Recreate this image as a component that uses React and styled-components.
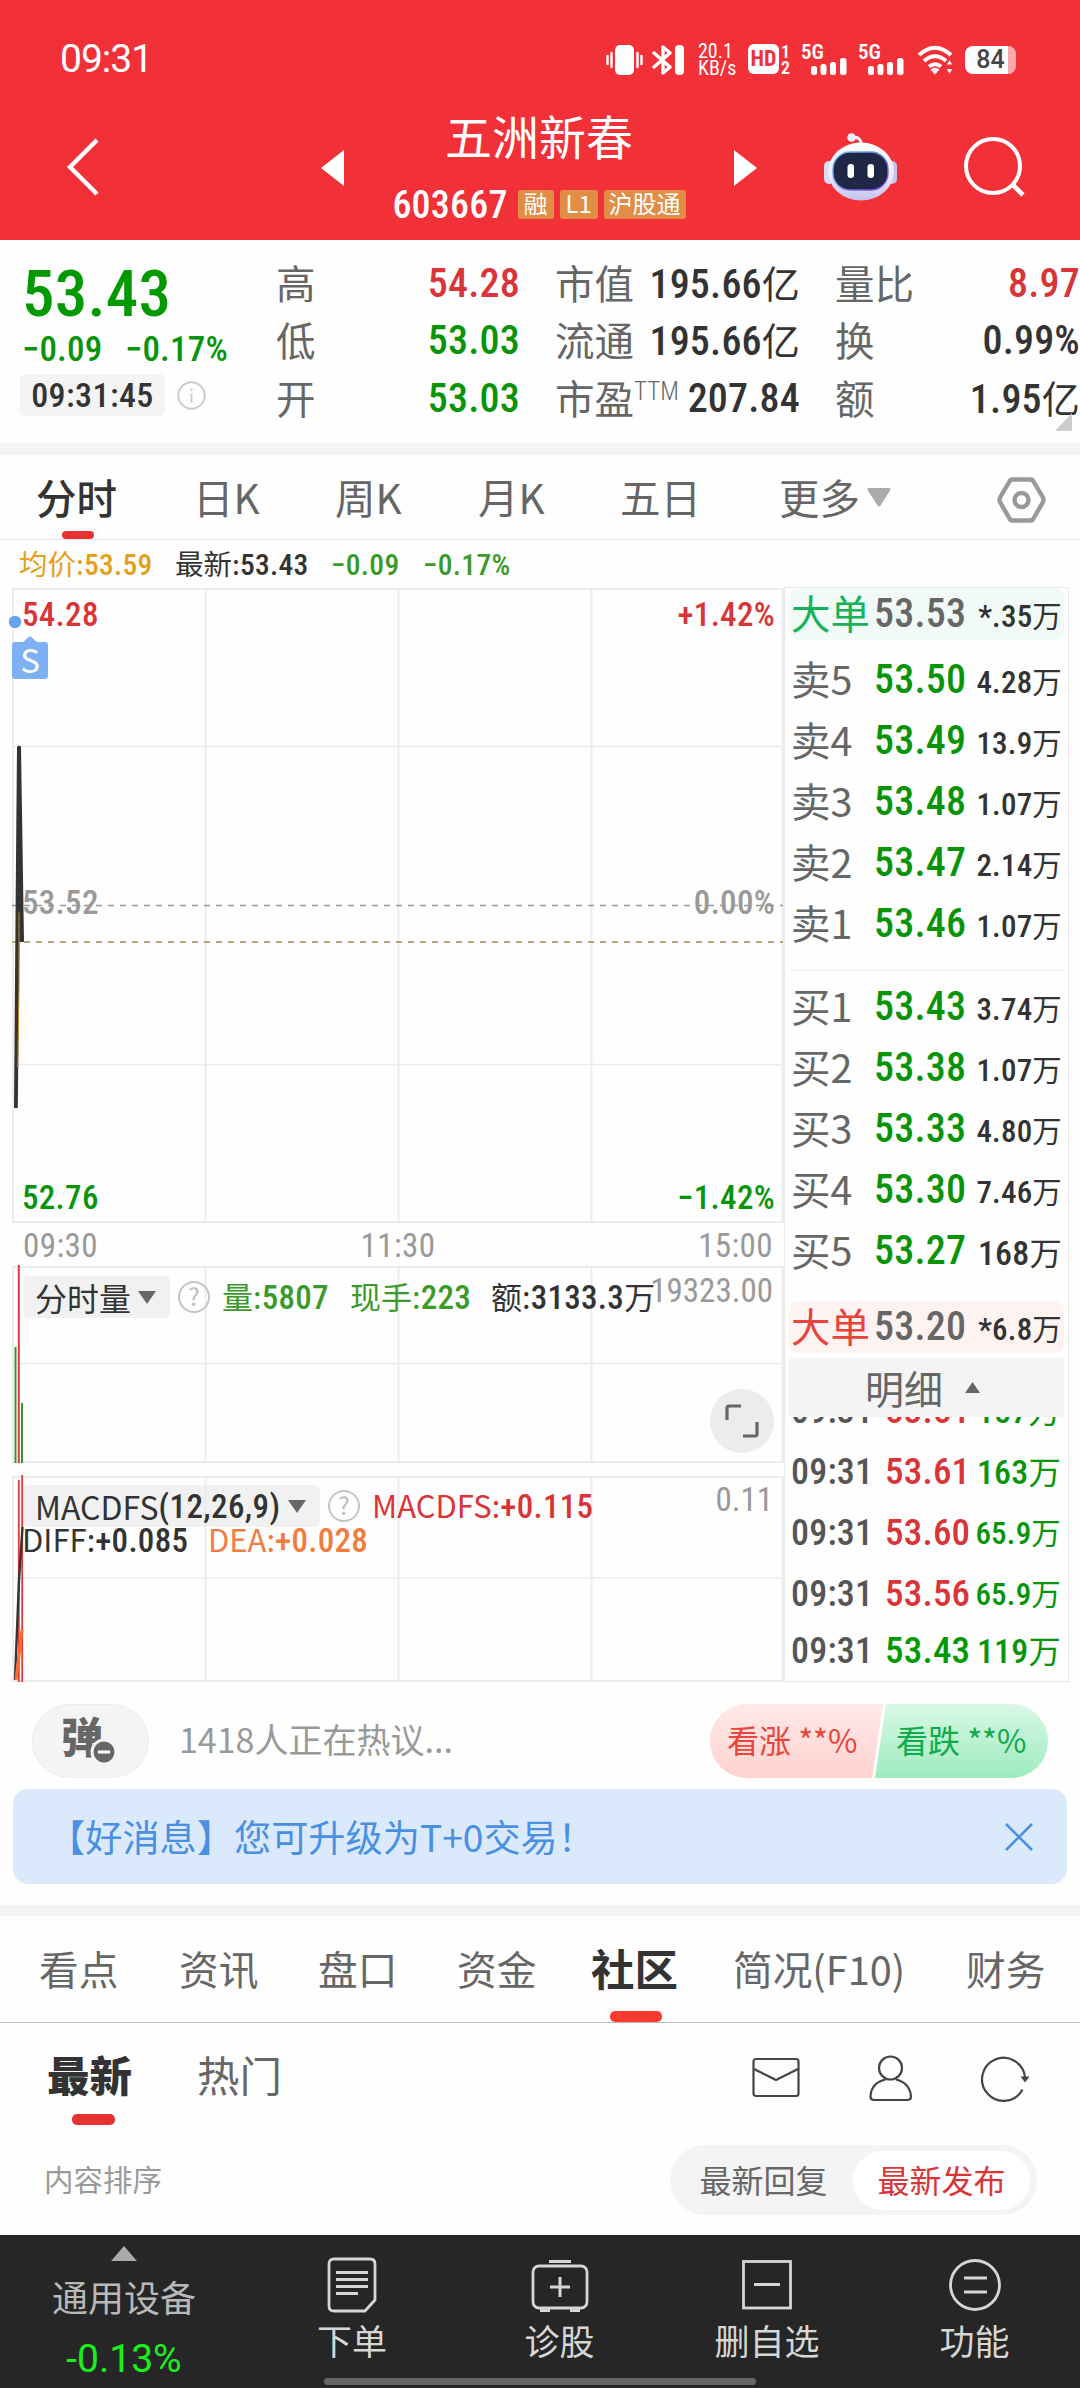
import React from 'react'
import styled, { createGlobalStyle, css } from 'styled-components'

const RED = '#d93437'
const GREEN = '#089408'
const INK = '#333'
const GREY = '#666'

export default function App () {
  return (
    <>
      <GlobalStyle />
      <Page>
        <Header />
        <Quote />
        <Strip $h={12} />
        <PeriodTabs />
        <Legend />
        <Market />
        <Discussion />
        <Banner>
          【好消息】您可升级为T+0交易！
          <svg width="28" height="28" viewBox="0 0 28 28" stroke="#4a90e2" strokeWidth="2.6">
            <path d="M1 1L27 27M27 1L1 27" />
          </svg>
        </Banner>
        <Strip $h={11} />
        <Community />
        <BottomBar />
      </Page>
    </>
  )
}

/* ---------- header ---------- */

function Header () {
  return (
    <StyledHeader>
      <StatusBar>
        <Clock>09:31</Clock>
        <StatusIcons />
      </StatusBar>
      <TitleBar>
        <svg width="34" height="58" viewBox="0 0 34 58" fill="none" stroke="#fff" strokeWidth="4.4">
          <path d="M31 2L4 29L31 56" />
        </svg>
        <Arrow viewBox="0 0 23 36"><path d="M0 18L23 0V36Z" /></Arrow>
        <StockTitle>
          <h1>五洲新春</h1>
          <StockCode>
            <Num $size={38} $color="#fff">603667</Num>
            <Tag $w={36}>融</Tag>
            <Tag $w={38}>L1</Tag>
            <Tag $w={82}>沪股通</Tag>
          </StockCode>
        </StockTitle>
        <Arrow viewBox="0 0 23 36"><path d="M23 18L0 0V36Z" /></Arrow>
        <Robot />
        <svg width="62" height="62" viewBox="0 0 62 62" fill="none" stroke="#fff" strokeWidth="4">
          <circle cx="30" cy="30" r="27" />
          <path d="M50 49L60 59" strokeWidth="4.6" />
        </svg>
      </TitleBar>
    </StyledHeader>
  )
}

function StatusIcons () {
  return (
    <IconRow>
      <svg width="37" height="32" viewBox="0 0 37 32" fill="#fff">
        <rect x="9" y="1" width="19" height="30" rx="5" />
        <path d="M1.500 12v8M5.500 9v14M31.500 9v14M35.500 12v8" stroke="#fff" strokeWidth="2.4" strokeLinecap="round" />
      </svg>
      <svg width="33" height="32" viewBox="0 0 33 32" fill="none" stroke="#fff" strokeWidth="3.4">
        <path d="M2 9L18 23L11 29V3L18 9L2 23" strokeLinejoin="round" strokeLinecap="round" />
        <rect x="23" y="1" width="9" height="30" rx="4" fill="#fff" stroke="none" />
      </svg>
      <NetSpeed>
        <span>20.1</span>
        <span>KB/s</span>
      </NetSpeed>
      <HdGroup>
        <HdBox>HD</HdBox>
        <HdNums><span>1</span><span>2</span></HdNums>
      </HdGroup>
      <Signal />
      <Signal />
      <svg width="37" height="30" viewBox="0 0 37 30" fill="none" stroke="#fff" strokeWidth="4">
        <path d="M2 10Q18 -4.500 34 10" />
        <path d="M7 16Q18 6.500 29 16" />
        <path d="M12 21.500Q18 17 24 21.500" />
        <path d="M13.500 24.500L18 29.500L22.500 24.500Q18 21 13.500 24.500Z" fill="#fff" stroke="none" />
        <path d="M32.500 14.500L36 20H29ZM32.500 29.500L36 23.500H29Z" fill="#fff" stroke="#f23037" strokeWidth="1" />
      </svg>
      <Battery>84</Battery>
    </IconRow>
  )
}

function Signal () {
  return (
    <SignalBox>
      <span>5G</span>
      <svg width="36" height="17" viewBox="0 0 36 17" fill="#fff">
        <rect x="0" y="8" width="6" height="9" rx="2.500" />
        <rect x="9.500" y="6" width="6" height="11" rx="2.500" />
        <rect x="19" y="4" width="6" height="13" rx="2.500" />
        <rect x="29" y="0" width="6.500" height="17" rx="2.500" />
      </svg>
    </SignalBox>
  )
}

function Robot () {
  return (
    <svg width="74" height="68" viewBox="0 0 74 68">
      <defs>
        <linearGradient id="shell" x1="0" y1="0" x2="0" y2="1">
          <stop offset="0" stopColor="#fff" />
          <stop offset=".6" stopColor="#eceafc" />
          <stop offset="1" stopColor="#c4c2ee" />
        </linearGradient>
        <linearGradient id="rim" x1="0" y1="0" x2="1" y2="1">
          <stop offset="0" stopColor="#6fc4e8" />
          <stop offset="1" stopColor="#7b3fe0" />
        </linearGradient>
      </defs>
      <path d="M37 12Q38 4 28 4" fill="none" stroke="#f1f0fb" strokeWidth="3" />
      <circle cx="27.500" cy="4.500" r="4.300" fill="#f1f0fb" />
      <rect x="0" y="28" width="10" height="23" rx="5" fill="#dddcf7" />
      <rect x="63" y="28" width="10" height="23" rx="5" fill="#c4c2f0" />
      <ellipse cx="37" cy="38.500" rx="33" ry="29" fill="url(#shell)" />
      <rect x="9" y="19" width="55" height="38" rx="17" fill="#1f2747" stroke="url(#rim)" strokeWidth="1.400" />
      <rect x="23.500" y="31" width="6.500" height="14" rx="3.200" fill="#fff" />
      <rect x="43.500" y="31" width="6.500" height="14" rx="3.200" fill="#fff" />
    </svg>
  )
}

/* ---------- quote panel ---------- */

const quoteRows = [
  ['高', '54.28', RED, '市值', '195.66亿', '量比', '8.97', RED],
  ['低', '53.03', GREEN, '流通', '195.66亿', '换', '0.99%', INK],
  ['开', '53.03', GREEN, '市盈', '207.84', '额', '1.95亿', INK],
]

function Quote () {
  return (
    <StyledQuote>
      <PriceBlock>
        <Num $size={65} $color="#090">53.43</Num>
        <Changes>
          <Num $size={35} $color={GREEN}>−0.09</Num>
          <Num $size={35} $color={GREEN}>−0.17%</Num>
        </Changes>
        <TimeLine>
          <TimeBox>09:31:45</TimeBox>
          <svg width="29" height="29" viewBox="0 0 29 29" fill="none" stroke="#ccc" strokeWidth="2">
            <circle cx="14.500" cy="14.500" r="13.200" />
            <path d="M14.500 12.500v9M14.500 7.500v2.500" />
          </svg>
        </TimeLine>
      </PriceBlock>
      <QuoteTable>
        {quoteRows.map(([a, av, ac, b, bv, c, cv, cc]) => (
          <QuoteRow key={a}>
            <Label>{a}</Label>
            <Num $size={40} $color={ac} $right>{av}</Num>
            <Label>{b}{b === '市盈' && <sup>TTM</sup>}</Label>
            <Num $size={40} $color={INK} $right>{withUnit(bv)}</Num>
            <Label>{c}</Label>
            <Num $size={40} $color={cc} $right>{withUnit(cv)}</Num>
          </QuoteRow>
        ))}
      </QuoteTable>
      <Corner viewBox="0 0 17 18"><path d="M17 0V18H0Z" /></Corner>
    </StyledQuote>
  )
}

// the unit is set in the regular CJK face, the digits in the condensed one
function withUnit (text) {
  const unit = text.slice(-1)
  if (unit !== '亿' && unit !== '万') return text
  return <>{text.slice(0, -1)}<Unit>{unit}</Unit></>
}

/* ---------- period tabs and legend ---------- */

function PeriodTabs () {
  return (
    <StyledPeriods>
      <Tab $active>分时</Tab>
      <Tab>日K</Tab>
      <Tab>周K</Tab>
      <Tab>月K</Tab>
      <Tab>五日</Tab>
      <Tab>
        更多
        <svg width="24" height="19" viewBox="0 0 24 19" fill="#aaa"><path d="M2 0H22Q24.500 0 23 2.500L13.500 17.500Q12 19.500 10.500 17.500L1 2.500Q-.5 0 2 0Z" /></svg>
      </Tab>
      <svg width="49" height="46" viewBox="0 0 49 46" fill="none" stroke="#999" strokeWidth="4.400" strokeLinejoin="round">
        <path d="M15.500 2.500H33.500Q35.500 2.500 36.500 4.500L46 20.500Q47 23 46 25L36.500 41.500Q35.500 43.500 33.500 43.500H15.500Q13.500 43.500 12.500 41.500L3 25Q2 23 3 20.500L12.500 4.500Q13.500 2.500 15.500 2.500Z" />
        <circle cx="24.500" cy="23" r="7" />
      </svg>
    </StyledPeriods>
  )
}

function Legend () {
  return (
    <StyledLegend>
      <Reading $color="#e3a01f">均价:<b>53.59</b></Reading>
      <Reading $color={INK}>最新:<b>53.43</b></Reading>
      <Reading $color="#3a9a2a"><b>−0.09</b></Reading>
      <Reading $color="#3a9a2a"><b>−0.17%</b></Reading>
    </StyledLegend>
  )
}

/* ---------- charts ---------- */

function Grid ({ h, lines, thick = 2 }) {
  return (
    <g stroke="#ebebeb" fill="none">
      <path d={`M13 1V${h}M205.500 1V${h}M398.500 1V${h}M591.500 1V${h}`} strokeWidth="1.800" />
      <path d={`M783 1V${h}`} strokeWidth="2.600" />
      <path d={`M12 2H784M12 ${h - 1}H784`} strokeWidth={thick} />
      {lines.map(y => <path key={y} d={`M12 ${y}H784`} strokeWidth="1.600" />)}
    </g>
  )
}

function Market () {
  return (
    <StyledMarket>
      <Charts>
        <Panel $h={636}>
          <Plot viewBox="0 0 784 636">
            <Grid h={636} lines={[159.5, 477.5]} />
            <path d="M12 318.500H783" stroke="#999" strokeWidth="1.600" strokeDasharray="6 6" />
            <path d="M12 355H783" stroke="#b9a47a" strokeWidth="2" strokeDasharray="6 6" />
            <path d="M17 160Q19 157 21 160L24 355H19.500L17.800 521H14L15.500 330Z" fill="#333" />
            <path d="M19 325V400L17.800 480" stroke="#c98a22" strokeWidth="1" fill="none" />
            <circle cx="15" cy="35" r="6.200" fill="#66a3ee" />
            <path d="M22 56L30 49L38 56Z" fill="#7eb1f3" />
            <rect x="12" y="55" width="36" height="37" rx="3" fill="#7eb1f3" />
          </Plot>
          <SellMark>S</SellMark>
          <PanelLabels>
            <LabelRow><AxisNum $color={RED}>54.28</AxisNum><AxisNum $color={RED}>+1.42%</AxisNum></LabelRow>
            <LabelRow $lift><AxisNum $color="#999">53.52</AxisNum><AxisNum $color="#999">0.00%</AxisNum></LabelRow>
            <LabelRow><AxisNum $color={GREEN}>52.76</AxisNum><AxisNum $color={GREEN}>−1.42%</AxisNum></LabelRow>
          </PanelLabels>
        </Panel>
        <TimeAxis>
          <span>09:30</span>
          <span>11:30</span>
          <span>15:00</span>
        </TimeAxis>
        <Panel $h={198}>
          <Plot viewBox="0 0 784 198">
            <Grid h={198} lines={[98.5]} />
            <path d="M15.500 82V198M22 138V198" stroke="#3f8f33" strokeWidth="2" />
            <path d="M18.800 0V198" stroke="#dc3a3c" strokeWidth="2" />
          </Plot>
          <IndicatorRow $top={11}>
            <Picker $w={147}>分时量<Down /></Picker>
            <HelpMark>?</HelpMark>
            <Reading $big $color="#3a9a2a" $w={128}>量:<b>5807</b></Reading>
            <Reading $big $color="#3a9a2a" $w={141}>现手:<b>223</b></Reading>
            <Reading $big $color={INK}>额:<b>3133.3</b>万</Reading>
          </IndicatorRow>
          <PanelMax $top={9}>19323.00</PanelMax>
          <Expand>
            <svg width="34" height="34" viewBox="0 0 34 34" fill="none" stroke="#666" strokeWidth="3.200">
              <path d="M2 16V4Q2 2 4 2H16M32 18V30Q32 32 30 32H18" />
            </svg>
          </Expand>
        </Panel>
        <Spacer />
        <Panel $h={207}>
          <Plot viewBox="0 0 784 207">
            <Grid h={207} lines={[103]} />
            <path d="M18.800 5V207M22.200 0V207" stroke="#dc3a3c" strokeWidth="1.800" />
            <path d="M15 205L19 105L22.500 52" stroke="#333" strokeWidth="2.400" fill="none" />
            <path d="M16 205L22 155" stroke="#ff6a2b" strokeWidth="3" fill="none" />
          </Plot>
          <IndicatorRow $top={10}>
            <Picker $w={297}>MACDFS<b>(12,26,9)</b><Down /></Picker>
            <HelpMark>?</HelpMark>
            <Reading $big $color={RED}>MACDFS:<b>+0.115</b></Reading>
          </IndicatorRow>
          <SecondRow>
            <Reading $big $color={INK} $w={186}>DIFF:<b>+0.085</b></Reading>
            <Reading $big $color="#f07c42">DEA:<b>+0.028</b></Reading>
          </SecondRow>
          <PanelMax $top={8}>0.11</PanelMax>
        </Panel>
      </Charts>
      <OrderBook />
    </StyledMarket>
  )
}

const Down = () => (
  <svg width="18" height="13" viewBox="0 0 18 13" fill="#666"><path d="M0 0H18L9 13Z" /></svg>
)

/* ---------- order book ---------- */

const asks = [
  ['卖5', '53.50', '4.28万'],
  ['卖4', '53.49', '13.9万'],
  ['卖3', '53.48', '1.07万'],
  ['卖2', '53.47', '2.14万'],
  ['卖1', '53.46', '1.07万'],
]
const bids = [
  ['买1', '53.43', '3.74万'],
  ['买2', '53.38', '1.07万'],
  ['买3', '53.33', '4.80万'],
  ['买4', '53.30', '7.46万'],
  ['买5', '53.27', '168万', true],
]
const ticks = [
  ['53.51', '157万', RED, true],
  ['53.61', '163万', RED, true],
  ['53.60', '65.9万', RED],
  ['53.56', '65.9万', RED],
  ['53.43', '119万', '#090', true],
]

function BookRow ({ row: [name, price, vol, wide] }) {
  return (
    <Level>
      <Label>{name}</Label>
      <Num $size={40} $color={GREEN}>{price}</Num>
      <Volume $size={wide ? 34 : 31} $color={INK} $right>{withUnit(vol)}</Volume>
    </Level>
  )
}

function OrderBook () {
  return (
    <StyledBook>
      <BigOrder $bg="#f1faf6">
        <Label $color="#14b357">大单</Label>
        <Num $size={40} $color={GREY}>53.53</Num>
        <Volume $size={31} $color={INK} $right>{withUnit('*.35万')}</Volume>
      </BigOrder>
      <Levels $top={9}>{asks.map(r => <BookRow key={r[0]} row={r} />)}</Levels>
      <Divider />
      <Levels $top={5}>{bids.map(r => <BookRow key={r[0]} row={r} />)}</Levels>
      <BigOrder $bg="#fff3f2" $top={20}>
        <Label $color="#e8433c">大单</Label>
        <Num $size={40} $color={GREY}>53.20</Num>
        <Volume $size={31} $color={INK} $right>{withUnit('*6.8万')}</Volume>
      </BigOrder>
      <DetailToggle>
        明细
        <svg width="15" height="11" viewBox="0 0 15 11" fill="#666"><path d="M0 11H15L7.500 0Z" /></svg>
      </DetailToggle>
      <TickList>
        {ticks.map(([price, vol, color, wide]) => (
          <Tick key={price}>
            <Num $size={36} $color="#555">09:31</Num>
            <Num $size={37} $color={color}>{price}</Num>
            <Num $size={wide ? 34 : 31} $color={GREEN} $right>{withUnit(vol)}</Num>
          </Tick>
        ))}
      </TickList>
    </StyledBook>
  )
}

/* ---------- discussion, community ---------- */

function Discussion () {
  return (
    <StyledDiscussion>
      <DanmuButton>
        <span>弹</span>
        <svg width="28" height="28" viewBox="0 0 28 28">
          <circle cx="14" cy="14" r="12" fill="#666" stroke="#f4f4f4" strokeWidth="3" />
          <path d="M8 14H20" stroke="#fff" strokeWidth="3" />
        </svg>
      </DanmuButton>
      <p>1418人正在热议...</p>
      <VoteUp>看涨 **%</VoteUp>
      <VoteDown>看跌 **%</VoteDown>
    </StyledDiscussion>
  )
}

function Community () {
  return (
    <>
      <Sections>
        <Section>看点</Section>
        <Section>资讯</Section>
        <Section>盘口</Section>
        <Section>资金</Section>
        <Section $active>社区</Section>
        <Section>简况(F10)</Section>
        <Section>财务</Section>
      </Sections>
      <SubTabs>
        <SubTab $active>最新</SubTab>
        <SubTab>热门</SubTab>
        <svg width="48" height="42" viewBox="0 0 48 42" fill="none" stroke="#444" strokeWidth="2.200">
          <rect x="1.500" y="2" width="45" height="37" rx="2.500" />
          <path d="M2 12L24 23L46 12" strokeLinejoin="round" />
        </svg>
        <svg width="44" height="47" viewBox="0 0 44 47" fill="none" stroke="#444" strokeWidth="2.200">
          <circle cx="21.500" cy="13" r="11.500" />
          <path d="M16.500 24.500Q2 28 1.500 41.500Q1.500 45 5 45H38Q42 45 42 41.500Q41 28 27 24.500" />
        </svg>
        <svg width="50" height="47" viewBox="0 0 50 47" fill="none" stroke="#444" strokeWidth="2.200">
          <path d="M42.500 34.500A21.500 21.500 0 1 1 45 23" />
          <path d="M40.500 21.500H49.500L45 27.500Z" fill="#444" stroke="none" />
        </svg>
      </SubTabs>
      <SortBar>
        <span>内容排序</span>
        <Segmented>
          <Option>最新回复</Option>
          <Option $active>最新发布</Option>
        </Segmented>
      </SortBar>
    </>
  )
}

/* ---------- bottom bar ---------- */

function BottomBar () {
  return (
    <StyledBottom>
      <IndexBox>
        <svg width="26" height="15" viewBox="0 0 26 15" fill="#aaa"><path d="M0 15H26L13 0Z" /></svg>
        <span>通用设备</span>
        <em>-0.13%</em>
      </IndexBox>
      <Action>
        <svg width="50" height="56" viewBox="0 0 50 56">
          <path d="M7 2H43Q48 2 48 7V43L38 54H7Q2 54 2 49V7Q2 2 7 2Z" />
          <path d="M9 15.500H41M9 22.500H41M9 29.500H41M9 36.500H31" strokeWidth="3" />
        </svg>
        下单
      </Action>
      <Action>
        <svg width="58" height="56" viewBox="0 0 58 56">
          <rect x="2" y="9" width="54" height="42" rx="6" />
          <path d="M18 4.500H40M29 20V40M19 30H39M9 53.500H19M39 53.500H49" strokeWidth="3" />
        </svg>
        诊股
      </Action>
      <Action>
        <svg width="50" height="56" viewBox="0 0 50 56">
          <rect x="1.500" y="4.500" width="47" height="46.500" />
          <path d="M12 27.500H38" strokeWidth="3" />
        </svg>
        删自选
      </Action>
      <Action>
        <svg width="52" height="56" viewBox="0 0 52 56">
          <circle cx="26" cy="28" r="24.500" />
          <path d="M15 21H38M15 35H38" strokeWidth="3" />
        </svg>
        功能
      </Action>
      <HomeIndicator />
    </StyledBottom>
  )
}

/* ---------- styles ---------- */

const GlobalStyle = createGlobalStyle`
  * {
    box-sizing: border-box;
  }
  body {
    margin: 0;
    background: #fff;
  }
  svg {
    display: block;
    flex: none;
  }
`

const cjk = css`
  font-family: 'Noto Sans CJK SC', sans-serif;
  font-stretch: normal;
  font-weight: 400;
`
const din = css`
  font-family: Roboto, 'Noto Sans CJK SC', sans-serif;
  font-stretch: 75%;
  font-weight: 460;
`

const Page = styled.div`
  ${cjk}
  width: 1080px;
  height: 2388px;
  overflow: hidden;
  color: ${INK};
  line-height: 1;
  white-space: nowrap;
  background: #fefefe;
`

const Num = styled.span`
  ${din}
  font-size: ${p => p.$size}px;
  letter-spacing: .2px;
  color: ${p => p.$color};
  text-align: ${p => (p.$right ? 'right' : 'left')};
`
const Volume = styled(Num)`
  padding-top: 4px;
`
const Unit = styled.span`
  ${cjk}
  font-size: .95em;
`
const Label = styled.span`
  padding-bottom: 4px;
  font-size: 39.5px;
  color: ${p => p.$color || GREY};
  sup {
    ${din}
    font-weight: 300;
    font-size: 25px;
    line-height: 0;
    vertical-align: 14px;
  }
`
const Strip = styled.div`
  height: ${p => p.$h}px;
  background: #f4f4f4;
`

const StyledHeader = styled.header`
  height: 240px;
  background: #f23037;
  color: #fff;
`
const StatusBar = styled.div`
  display: flex;
  justify-content: space-between;
  align-items: center;
  height: 119px;
  padding: 0 61px 0 60px;
`
const Clock = styled.span`
  ${din}
  font-stretch: normal;
  font-weight: 400;
  font-size: 39px;
  letter-spacing: -1px;
`
const IconRow = styled.div`
  display: grid;
  grid-template-columns: 46px 46px 50px 53px 57px 59px 48px 54px;
  align-items: center;
`
const NetSpeed = styled.div`
  ${din}
  display: flex;
  flex-direction: column;
  font-weight: 400;
  font-size: 20px;
  line-height: 17px;
`
const HdGroup = styled.div`
  display: flex;
  gap: 2px;
`
const HdBox = styled.div`
  ${din}
  display: flex;
  align-items: center;
  justify-content: center;
  width: 31px;
  height: 30px;
  border-radius: 6px;
  background: #fff;
  color: #f23037;
  font-weight: 700;
  font-size: 22px;
`
const HdNums = styled.div`
  ${din}
  display: flex;
  flex-direction: column;
  font-weight: 600;
  font-size: 18px;
  line-height: 16px;
`
const SignalBox = styled.div`
  ${din}
  height: 30px;
  font-size: 21px;
  line-height: 14px;
  span {
    display: block;
    font-weight: 600;
  }
  svg {
    margin: -1px 0 0 10px;
  }
`
const Battery = styled.div`
  ${din}
  display: flex;
  align-items: center;
  justify-content: center;
  width: 51px;
  height: 28px;
  border-radius: 8px;
  background: linear-gradient(90deg, #fff 84%, #f9a9ac 84%);
  color: #444;
  font-stretch: normal;
  font-size: 25px;
`
const TitleBar = styled.div`
  display: grid;
  grid-template-rows: 96px;
  grid-template-columns: 255px 23px 390px 90px 139px 62px;
  align-items: center;
  height: 96px;
  padding-left: 66px;
`
const Arrow = styled.svg`
  width: 23px;
  height: 36px;
  margin-top: 2px;
  fill: #fff;
`
const StockTitle = styled.div`
  display: flex;
  flex-direction: column;
  align-items: center;
  h1 {
    margin: 0;
    font-weight: 400;
    font-size: 47px;
  }
`
const StockCode = styled.div`
  display: flex;
  align-items: center;
  gap: 6px;
  margin-top: 28px;
  span:first-child {
    margin-right: 4px;
  }
`
const Tag = styled.div`
  width: ${p => p.$w}px;
  height: 29px;
  border-radius: 3px;
  background: #e28d46;
  font-size: 24px;
  line-height: 26px;
  text-align: center;
`

const StyledQuote = styled.section`
  position: relative;
  display: grid;
  grid-template-columns: 254px 804px;
  height: 203px;
  padding-left: 22px;
`
const PriceBlock = styled.div`
  display: flex;
  flex-direction: column;
  padding-top: 22px;
`
const Changes = styled.div`
  display: grid;
  grid-template-columns: 103px auto;
  margin-top: 5px;
`
const TimeLine = styled.div`
  display: flex;
  align-items: center;
  gap: 12px;
  margin: 7px 0 0 -2px;
`
const TimeBox = styled.span`
  ${din}
  width: 145px;
  height: 42px;
  border-radius: 5px;
  background: #f4f4f4;
  font-size: 34px;
  letter-spacing: .4px;
  line-height: 42px;
  text-align: center;
`
const QuoteTable = styled.div`
  display: grid;
  grid-template-rows: 57px 58px 58px;
  padding-top: 15px;
`
const QuoteRow = styled.div`
  display: grid;
  grid-template-columns: 60px 184px 35px 80px 165px 35px 77px 168px;
  align-items: center;
  > :nth-child(3) {
    grid-column: 4;
  }
  > :nth-child(5) {
    grid-column: 7;
  }
`
const Corner = styled.svg`
  position: absolute;
  right: 8px;
  bottom: 12px;
  width: 17px;
  height: 18px;
  fill: #ccc;
`

const StyledPeriods = styled.nav`
  display: grid;
  grid-template-columns: 157px 142px 143px 142px 159px 218px 49px;
  align-items: center;
  height: 85px;
  padding: 5px 0 0 36px;
  border-bottom: 1px solid #e5e5e5;
`
const Tab = styled.div`
  position: relative;
  display: flex;
  align-items: center;
  gap: 7px;
  height: 79px;
  padding-bottom: 5px;
  font-size: 40.5px;
  font-weight: ${p => (p.$active ? 500 : 400)};
  color: ${p => (p.$active ? INK : GREY)};
  ${p => p.$active && css`
    &::after {
      content: '';
      position: absolute;
      left: 26px;
      bottom: 0;
      width: 32px;
      height: 8px;
      border-radius: 4px;
      background: #e63232;
    }
  `}
`
const StyledLegend = styled.div`
  display: grid;
  grid-template-columns: 156px 156px 92px 100px;
  align-items: center;
  height: 47px;
  padding: 2px 0 0 19px;
`
const Reading = styled.span`
  flex: none;
  width: ${p => (p.$w ? `${p.$w}px` : 'auto')};
  color: ${p => p.$color};
  font-size: ${p => (p.$big ? 31 : 28.5)}px;
  b {
    ${din}
    font-size: ${p => (p.$big ? 33 : 29.5)}px;
    letter-spacing: .3px;
  }
`

const StyledMarket = styled.section`
  display: grid;
  grid-template-rows: 1095px;
  grid-template-columns: 784px 285px;
`
const Charts = styled.div`
  display: flex;
  flex-direction: column;
`
const Panel = styled.div`
  position: relative;
  height: ${p => p.$h}px;
`
const Plot = styled.svg`
  position: absolute;
  inset: 0;
  width: 784px;
  height: 100%;
`
const PanelLabels = styled.div`
  position: relative;
  display: flex;
  flex-direction: column;
  justify-content: space-between;
  height: 100%;
  padding: 11px 9px 9px 22px;
`
const LabelRow = styled.div`
  display: flex;
  justify-content: space-between;
  padding-bottom: ${p => (p.$lift ? 8 : 0)}px;
`
const AxisNum = styled.span`
  ${din}
  font-size: 33px;
  letter-spacing: .3px;
  color: ${p => p.$color};
`
const SellMark = styled.div`
  position: absolute;
  left: 12px;
  top: 55px;
  width: 36px;
  color: #fff;
  font-size: 33px;
  line-height: 34px;
  text-align: center;
`
const TimeAxis = styled.div`
  ${din}
  display: flex;
  justify-content: space-between;
  align-items: center;
  height: 42px;
  padding: 2px 11px 0 23px;
  font-weight: 400;
  font-size: 33px;
  letter-spacing: .4px;
  color: #999;
`
const IndicatorRow = styled.div`
  display: flex;
  align-items: center;
  height: 42px;
  margin-left: 23px;
  transform: translateY(${p => p.$top}px);
`
const Picker = styled.div`
  display: flex;
  align-items: center;
  justify-content: space-between;
  width: ${p => p.$w}px;
  height: 42px;
  padding: 0 14px 0 12px;
  border-radius: 5px;
  background: rgba(235, 235, 235, .7);
  font-size: 32px;
  b {
    ${din}
    flex: 1;
    font-size: 33px;
    letter-spacing: .4px;
  }
`
const HelpMark = styled.div`
  display: flex;
  justify-content: center;
  align-items: center;
  width: 32px;
  height: 32px;
  margin: 0 12px 0 8px;
  border: 2px solid #c4c4c4;
  border-radius: 50%;
  color: #bbb;
  font-size: 24px;
  padding-bottom: 3px;
`
const SecondRow = styled.div`
  display: flex;
  margin-left: 22px;
  transform: translateY(6px);
`
const PanelMax = styled.div`
  ${din}
  position: absolute;
  right: 11px;
  top: ${p => p.$top}px;
  font-weight: 400;
  font-size: 33px;
  color: #999;
`
const Expand = styled.div`
  position: absolute;
  right: 10px;
  bottom: 10px;
  display: flex;
  align-items: center;
  justify-content: center;
  width: 64px;
  height: 64px;
  border-radius: 50%;
  background: #ececec;
`
const Spacer = styled.div`
  height: 12px;
`

const StyledBook = styled.aside`
  display: flex;
  flex-direction: column;
  border: 1px solid #e8e8e8;
  padding: 0 4px;
`
const bookRow = css`
  display: grid;
  grid-template-columns: 83px 92px 96px;
  align-items: center;
  padding-left: 2px;
`
const BigOrder = styled.div`
  ${bookRow}
  flex: none;
  height: 52px;
  margin-top: ${p => p.$top || 0}px;
  border-radius: 9px;
  background: ${p => p.$bg};
`
const Levels = styled.div`
  flex: none;
  padding-top: ${p => p.$top}px;
`
const Level = styled.div`
  ${bookRow}
  height: 61px;
`
const Divider = styled.div`
  flex: none;
  height: 2px;
  margin-top: 15px;
  background: #f4f4f4;
`
const DetailToggle = styled.div`
  display: flex;
  flex: none;
  align-items: center;
  justify-content: center;
  gap: 22px;
  height: 59px;
  margin-top: 5px;
  padding-right: 8px;
  background: #f4f4f4;
  color: ${GREY};
  font-size: 39px;
`
const TickList = styled.div`
  display: flex;
  flex: 1;
  flex-direction: column;
  justify-content: flex-end;
  min-height: 0;
  overflow: hidden;
`
const Tick = styled.div`
  display: grid;
  flex: none;
  grid-template-columns: 94px 82px 94px;
  align-items: center;
  height: 61px;
  padding-left: 2px;
  &:last-child {
    margin-top: -4px;
  }
`

const StyledDiscussion = styled.section`
  display: flex;
  align-items: center;
  height: 107px;
  padding: 11px 32px 0 32px;
  p {
    flex: 1;
    margin: 0 0 0 30px;
    padding-bottom: 4px;
    color: #999;
    font-size: 34px;
  }
`
const DanmuButton = styled.div`
  position: relative;
  width: 117px;
  height: 74px;
  border: 1px solid #ececec;
  border-radius: 37px;
  background: #f4f4f4;
  color: ${GREY};
  span {
    display: block;
    margin: 9px 0 0 28px;
    font-weight: 900;
    font-size: 42px;
  }
  svg {
    position: absolute;
    left: 57px;
    top: 33px;
  }
`
const vote = css`
  height: 74px;
  font-size: 32px;
  line-height: 70px;
`
const VoteUp = styled.div`
  ${vote}
  width: 173px;
  padding-left: 17px;
  border-radius: 37px 0 0 37px;
  background: linear-gradient(#ffe9e8, #fed2cf);
  color: #e8453c;
  clip-path: polygon(0 0, 100% 0, 162px 100%, 0 100%);
`
const VoteDown = styled.div`
  ${vote}
  width: 173px;
  margin-left: -8px;
  padding-left: 21px;
  border-radius: 0 37px 37px 0;
  background: linear-gradient(#d9f8e6, #9debbd);
  color: #0dab4c;
  clip-path: polygon(11px 0, 100% 0, 100% 100%, 0 100%);
`
const Banner = styled.section`
  display: flex;
  align-items: center;
  justify-content: space-between;
  height: 95px;
  margin: 0 13px 21px;
  padding: 0 34px 0 35px;
  border-radius: 15px;
  background: #dbe9fc;
  color: #4a90e2;
  font-size: 37.2px;
`

const Sections = styled.nav`
  display: grid;
  grid-template-columns: 140px 139px 139px 134px 142px 233px 100px;
  height: 107px;
  padding-left: 39px;
  border-bottom: 1px solid #bbb;
`
const Section = styled.div`
  position: relative;
  font-size: ${p => (p.$active ? 43.5 : 39.7)}px;
  font-weight: ${p => (p.$active ? 700 : 400)};
  color: ${p => (p.$active ? INK : GREY)};
  line-height: 104px;
  ${p => p.$active && css`
    &::after {
      content: '';
      position: absolute;
      left: 19px;
      bottom: 0;
      width: 52px;
      height: 11px;
      border-radius: 5px;
      background: #ff3b30;
    }
  `}
`
const SubTabs = styled.div`
  display: grid;
  grid-template-columns: 150px 555px 117px 111px 50px;
  align-items: center;
  height: 107px;
  padding-left: 47px;
`
const SubTab = styled.div`
  position: relative;
  margin-bottom: 8px;
  font-size: 42.5px;
  font-weight: ${p => (p.$active ? 800 : 400)};
  color: ${p => (p.$active ? INK : GREY)};
  line-height: 102px;
  ${p => p.$active && css`
    &::after {
      content: '';
      position: absolute;
      left: 25px;
      bottom: 0;
      width: 43px;
      height: 11px;
      border-radius: 5px;
      background: #e63232;
    }
  `}
`
const SortBar = styled.div`
  display: flex;
  align-items: center;
  justify-content: space-between;
  height: 105px;
  padding: 0 43px 5px 44px;
  color: #999;
  font-size: 29.5px;
  > span {
    padding-bottom: 3px;
  }
`
const Segmented = styled.div`
  display: flex;
  align-items: center;
  justify-content: space-between;
  width: 367px;
  height: 70px;
  padding: 0 7px 0 5px;
  border-radius: 35px;
  background: #f4f4f4;
`
const Option = styled.div`
  width: 177px;
  height: 59px;
  border-radius: 30px;
  background: ${p => (p.$active ? '#fff' : 'none')};
  color: ${p => (p.$active ? RED : GREY)};
  font-size: 32px;
  line-height: 56px;
  text-align: center;
`

const StyledBottom = styled.footer`
  position: relative;
  display: grid;
  grid-template-columns: 248px 208px 207px 208px 207px;
  height: 153px;
  background: #262626;
`
const IndexBox = styled.div`
  display: flex;
  flex-direction: column;
  align-items: center;
  padding-top: 11px;
  color: #b8b8b8;
  font-size: 36px;
  span {
    margin-top: 17px;
  }
  em {
    font-style: normal;
    font-family: Roboto, sans-serif;
    font-size: 39px;
    color: #1af01a;
    margin-top: 26px;
  }
`
const Action = styled.div`
  display: flex;
  flex-direction: column;
  align-items: center;
  gap: 9px;
  padding-top: 22px;
  color: #d6d6d6;
  font-size: 35px;
  svg {
    fill: none;
    stroke: #d6d6d6;
    stroke-width: 2.8;
  }
`
const HomeIndicator = styled.div`
  position: absolute;
  left: 324px;
  bottom: 3px;
  width: 432px;
  height: 7px;
  border-radius: 4px;
  background: #666;
`
